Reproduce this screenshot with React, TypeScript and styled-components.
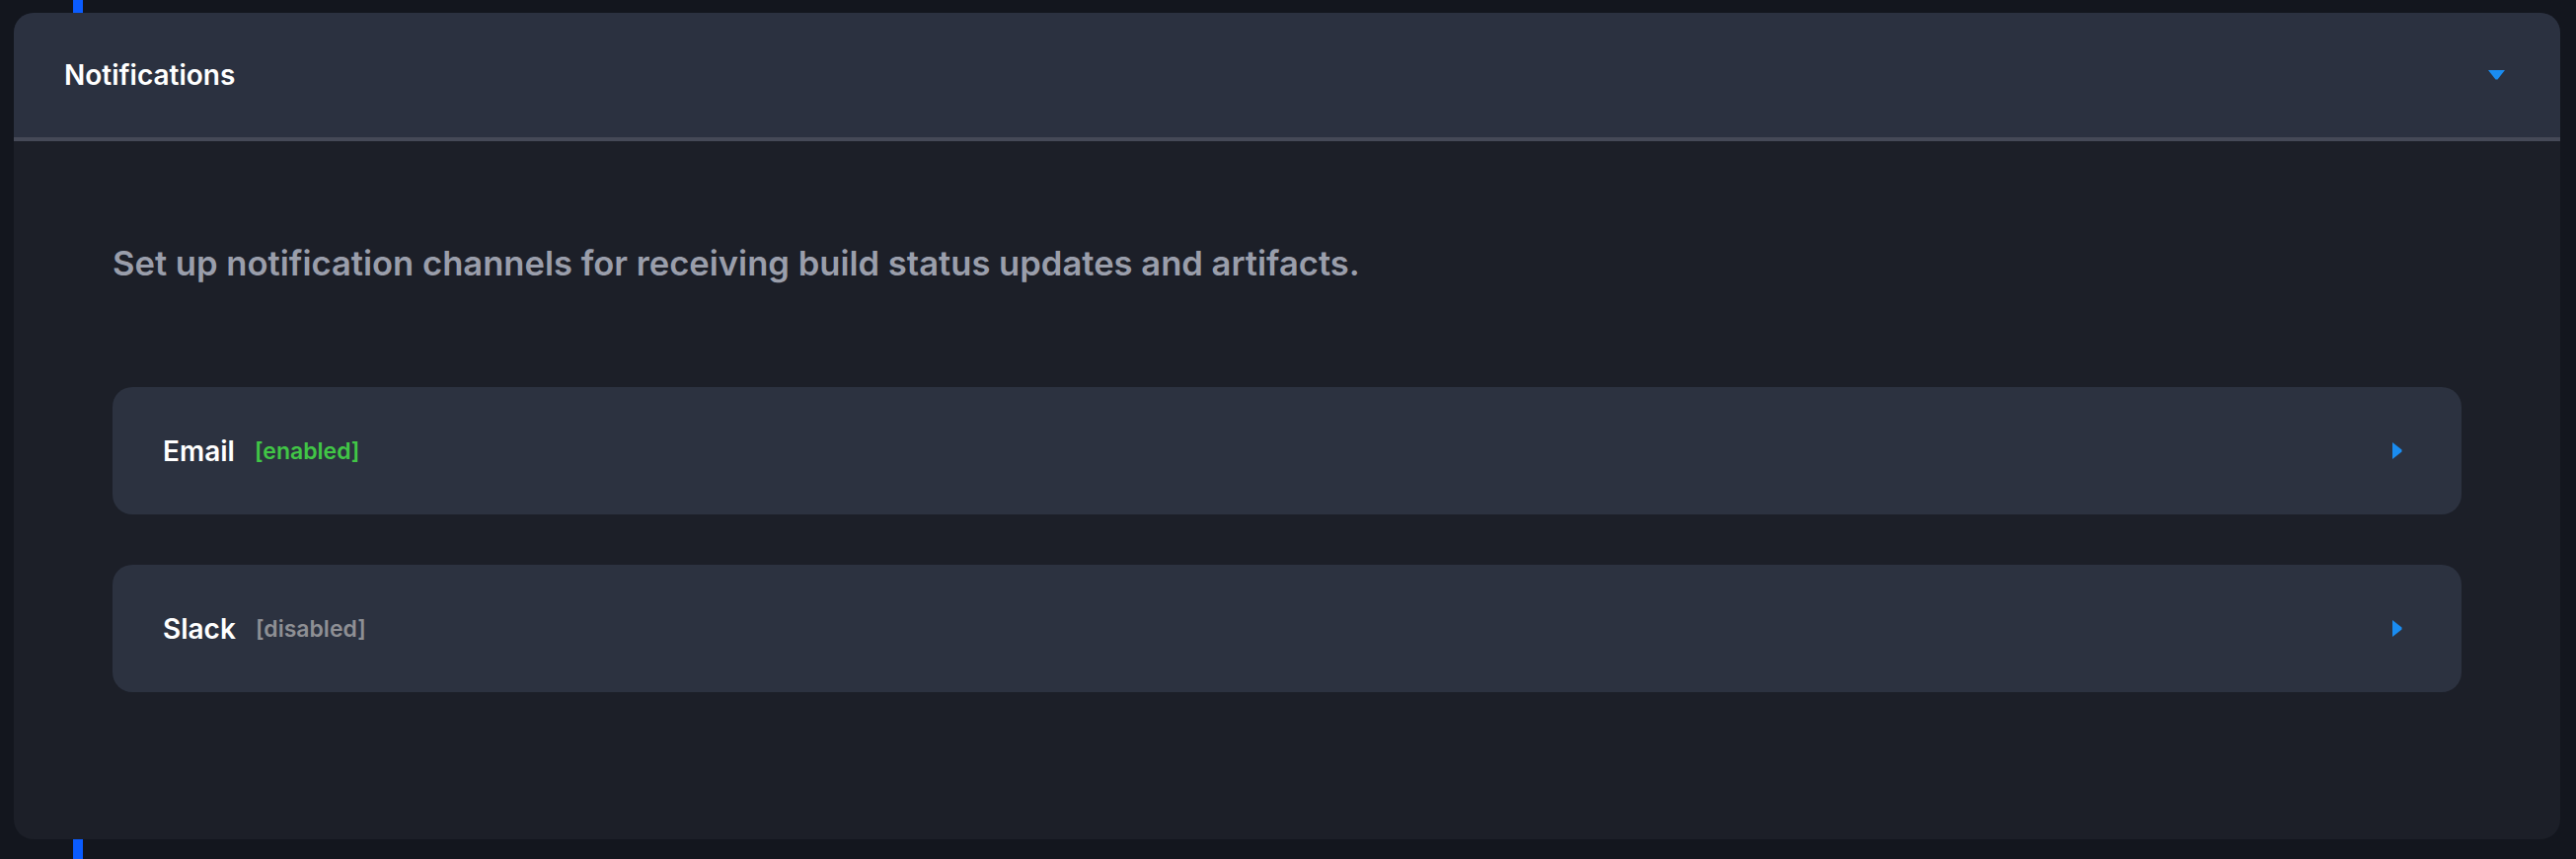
import styled, { createGlobalStyle } from 'styled-components';

const GlobalStyle = createGlobalStyle`
  * {
    box-sizing: border-box;
  }

  body {
    margin: 0;
    background: #13161e;
    font-family: Inter, "Noto Sans", sans-serif;
  }
`;

const Page = styled.div`
  min-height: 870px;
  padding: 13px 16px 20px 14px;
  display: flex;
  background:
    linear-gradient(#0a5cff, #0a5cff) no-repeat 74px 0 / 10px 100%,
    #13161e;
`;

const Panel = styled.section`
  flex: 1;
  display: flex;
  flex-direction: column;
  background: #1c1f28;
  border-radius: 20px;
  overflow: hidden;
`;

const PanelHeader = styled.div`
  height: 130px;
  flex-shrink: 0;
  display: flex;
  align-items: center;
  justify-content: space-between;
  padding: 0 56px 0 51px;
  background: #2b3140;
  border-bottom: 4px solid #454957;
  cursor: pointer;
`;

const PanelTitle = styled.h2`
  margin: 0;
  font-size: 28px;
  font-weight: 600;
  color: #ffffff;
`;

const PanelBody = styled.div`
  padding: 103px 100px 0 100px;
  display: flex;
  flex-direction: column;
`;

const Description = styled.p`
  margin: 0 0 106px 0;
  font-size: 34.6px;
  line-height: 40px;
  font-weight: 600;
  color: #9a9eab;
`;

const ChannelList = styled.div`
  display: flex;
  flex-direction: column;
  gap: 51px;
`;

const ChannelCard = styled.div`
  height: 129px;
  display: flex;
  align-items: center;
  padding: 0 60px 0 51px;
  background: #2c3240;
  border-radius: 20px;
  cursor: pointer;
`;

const ChannelName = styled.span`
  font-size: 28px;
  font-weight: 600;
  color: #ffffff;
`;

const ChannelStatus = styled.span<{ enabled: boolean }>`
  margin-left: 20px;
  font-size: 23px;
  font-weight: 600;
  color: ${({ enabled }) => (enabled ? '#41c646' : '#8e8f94')};
`;

const Spacer = styled.div`
  flex: 1;
`;

const CaretDown = () => (
  <svg width="17" height="10" viewBox="0 0 17 10">
    <path d="M0 0 H17 L9.5 9.5 H7.5 Z" fill="#1a8cf0" />
  </svg>
);

const CaretRight = () => (
  <svg width="10" height="17" viewBox="0 0 10 17">
    <path d="M0 0 L9.5 7.5 V9.5 L0 17 Z" fill="#1a8cf0" />
  </svg>
);

const channels = [
  { id: 'email', name: 'Email', enabled: true },
  { id: 'slack', name: 'Slack', enabled: false },
];

const App = () => {
  return (
    <>
      <GlobalStyle />
      <Page>
        <Panel>
          <PanelHeader>
            <PanelTitle>Notifications</PanelTitle>
            <CaretDown />
          </PanelHeader>
          <PanelBody>
            <Description>
              Set up notification channels for receiving build status updates and artifacts.
            </Description>
            <ChannelList>
              {channels.map((channel) => (
                <ChannelCard key={channel.id}>
                  <ChannelName>{channel.name}</ChannelName>
                  <ChannelStatus enabled={channel.enabled}>
                    [{channel.enabled ? 'enabled' : 'disabled'}]
                  </ChannelStatus>
                  <Spacer />
                  <CaretRight />
                </ChannelCard>
              ))}
            </ChannelList>
          </PanelBody>
        </Panel>
      </Page>
    </>
  );
};

export default App;
